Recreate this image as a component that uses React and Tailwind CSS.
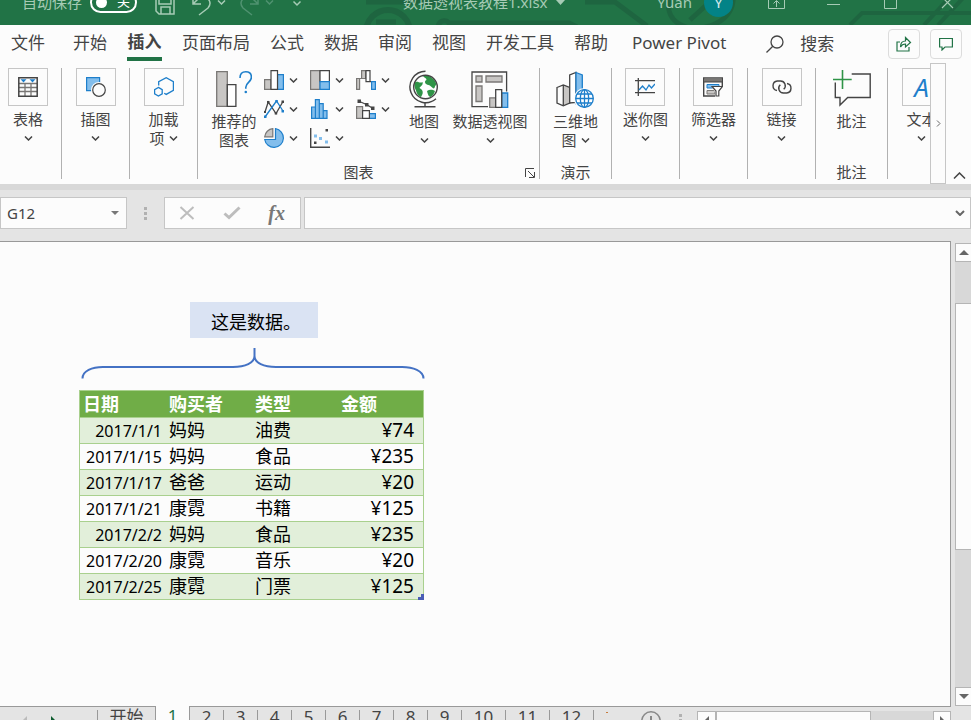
// src/App.jsx

import React, { useState } from "react";

/* ===========================
      DATA
=========================== */
const TABS = [
  "开始",
  "插入",
  "页面布局",
  "公式",
  "数据",
  "审阅",
  "视图",
  "开发工具",
  "帮助",
];

const ROWS = [
  { date: "2017/1/1", buyer: "妈妈", type: "油费", amount: "¥74" },
  { date: "2017/1/15", buyer: "妈妈", type: "食品", amount: "¥235" },
  { date: "2017/1/17", buyer: "爸爸", type: "运动", amount: "¥20" },
  { date: "2017/1/21", buyer: "康霓", type: "书籍", amount: "¥125" },
  { date: "2017/2/2", buyer: "妈妈", type: "食品", amount: "¥235" },
  { date: "2017/2/20", buyer: "康霓", type: "音乐", amount: "¥20" },
  { date: "2017/2/25", buyer: "康霓", type: "门票", amount: "¥125" },
];

const SHEETS = ["2", "3", "4", "5", "6", "7", "8", "9", "10", "11", "12"];

const BLUE = "#1e7fcb";
const LIGHT = "#83beec";
const GRAY = "#c8c6c4";
const MID = "#797775";
const DARK = "#444";

export default function App() {
  const [activeTab, setActiveTab] = useState("插入");

  return (
    <div className="flex h-screen flex-col overflow-hidden bg-[#e4e4e4] font-['Noto_Sans','Noto_Sans_CJK_SC',sans-serif] text-[#444]">
      <TitleBar />
      <TabRow active={activeTab} onChange={setActiveTab} />
      <Ribbon />
      <FormulaBar />
      <div className="flex min-h-0 flex-1">
        <Sheet />
        <VerticalScroll />
      </div>
      <SheetBar />
    </div>
  );
}

/* ===========================
      TITLE BAR
=========================== */
function TitleBar() {
  return (
    <header className="relative flex h-[25px] shrink-0 flex-col justify-end overflow-hidden bg-[#217346] text-[15px] text-[#a6cbb5]">
      <svg
        className="absolute bottom-0 left-[330px] h-[25px] w-[641px]"
        viewBox="0 0 641 25"
        fill="none"
        stroke="#1e6540"
        strokeWidth="5"
      >
        <path d="M36 2h80M46 22h20M120 25a6 6 0 1 1-1-2h120l8 4" />
        <path d="M36 32a22 22 0 1 1 44 0" strokeWidth="6" />
        <path d="M255 2h30l32 24M340 -6c-8 26 14 40 40 32 18-6 26-20 22-34M360 20l22-20" />
        <path d="M520 25l12-12h109M594 25l26-28M608 25l26-28" strokeWidth="4" />
      </svg>
      <div className="relative flex h-[46px] shrink-0 items-center pr-[17px] pl-[22px]">
        <label className="flex items-center gap-2">
          <span>自动保存</span>
          <span className="relative flex h-[21px] w-[47px] items-center justify-end rounded-full border-2 border-white pr-[5px] text-[13px] text-white">
            <input type="checkbox" className="absolute inset-0 appearance-none" />
            <span className="absolute left-1 h-[11px] w-[11px] rounded-full bg-white" />
            关
          </span>
        </label>
        <div className="ml-[18px] flex items-center">
          <button aria-label="保存">
            <svg className="h-[26px] w-5" viewBox="0 0 20 26" fill="none" stroke="#a6cbb5" strokeWidth="1.5">
              <path d="M1 6h18v19H4l-3-3zM4 6v9h12V6M6 25v-7h9v7" />
            </svg>
          </button>
          <button aria-label="撤消" className="ml-4">
            <svg className="h-[28px] w-5" viewBox="0 0 20 28" fill="none" stroke="#a6cbb5" strokeWidth="1.5">
              <path d="M2 8v8h8M2 16l6-6c8-4 14 4 9 10l-9 7" />
            </svg>
          </button>
          <Chevron className="ml-[6px] text-[#a6cbb5]" />
          <button aria-label="恢复" className="ml-[14px]">
            <svg className="h-[28px] w-5" viewBox="0 0 20 28" fill="none" stroke="#4f9270" strokeWidth="1.5">
              <path d="M18 8v8h-8M18 16l-6-6C4 6-2 14 3 20l9 7" />
            </svg>
          </button>
          <Chevron className="ml-[5px] text-[#4f9270]" />
          <button aria-label="自定义快速访问工具栏" className="ml-[18px]">
            <svg className="h-[10px] w-[10px]" viewBox="0 0 10 10" fill="none" stroke="#a6cbb5" strokeWidth="1.5">
              <path d="M1 1h8M1.500 4.500L5 8l3.500-3.500" />
            </svg>
          </button>
        </div>
        <div className="ml-[101px] flex items-center gap-2">
          <span>数据透视表教程1.xlsx</span>
          <svg className="h-[5px] w-[9px]" viewBox="0 0 9 5" fill="#a6cbb5">
            <path d="M0 0h9L4.500 5z" />
          </svg>
        </div>
        <div className="ml-auto flex items-center">
          <span>Yuan</span>
          <span className="ml-3 flex h-[29px] w-[29px] items-center justify-center rounded-full bg-[#038387] text-[#d5eaec]">
            Y
          </span>
          <button aria-label="功能区显示选项" className="ml-[35px]">
            <svg className="h-[14px] w-[17px]" viewBox="0 0 17 14" fill="none" stroke="#a6cbb5">
              <path d="M.5.500h16v13H.500zM.5 3.500h16M8.500 12V6M5.500 8.500l3-3 3 3" />
            </svg>
          </button>
          <button aria-label="最小化" className="ml-[42px]">
            <svg className="h-[13px] w-[13px]" viewBox="0 0 13 13" stroke="#a6cbb5">
              <path d="M0 8.500h13" />
            </svg>
          </button>
          <button aria-label="最大化" className="ml-11">
            <svg className="h-[13px] w-[13px]" viewBox="0 0 13 13" fill="none" stroke="#a6cbb5">
              <path d="M.5.500h12v12H.500z" />
            </svg>
          </button>
          <button aria-label="关闭" className="ml-11">
            <svg className="h-[13px] w-[13px]" viewBox="0 0 13 13" stroke="#a6cbb5" strokeWidth="1.200">
              <path d="M1 1l11 11M12 1L1 12" />
            </svg>
          </button>
        </div>
      </div>
    </header>
  );
}

/* ===========================
      TAB ROW
=========================== */
function TabRow({ active, onChange }) {
  return (
    <div className="flex h-[37px] shrink-0 items-center bg-[#fcfcfc] pr-[9px] pl-[11px] text-[17px] leading-5 whitespace-nowrap">
      <button className="h-full shrink-0 border-b-4 border-transparent pt-[2px]">文件</button>
      <nav className="ml-7 flex h-full shrink-0 gap-5">
        {TABS.map((tab) => (
          <button
            key={tab}
            onClick={() => onChange(tab)}
            className={
              tab === active
                ? "h-[36px] w-[35px] border-b-4 border-[#217346] pt-px font-bold"
                : "h-full border-b-4 border-transparent pt-[2px]"
            }
          >
            {tab}
          </button>
        ))}
        <button className="ml-1 h-full border-b-4 border-transparent pt-[2px]">Power Pivot</button>
      </nav>
      <button className="ml-10 flex shrink-0 items-center gap-4">
        <svg className="h-[18px] w-[18px]" viewBox="0 0 18 18" fill="none" stroke={DARK} strokeWidth="1.300">
          <circle cx="11" cy="7" r="6" />
          <path d="M6.800 11.200L.5 17.500" />
        </svg>
        搜索
      </button>
      <div className="ml-auto flex gap-[10px]">
        <button
          aria-label="共享"
          className="flex h-[30px] w-8 items-center justify-center rounded-sm border border-[#dcdcdc]"
        >
          <svg className="h-4 w-4" viewBox="0 0 16 16" fill="none" stroke="#217346" strokeWidth="1.200">
            <path d="M4 6H1v9h12v-4M4.500 11c0-4 2-6 5-6V1.500l5 5-5 4.500V8C7 8 5.500 9 4.500 11z" />
          </svg>
        </button>
        <button
          aria-label="批注"
          className="flex h-[30px] w-8 items-center justify-center rounded-sm border border-[#dcdcdc]"
        >
          <svg className="h-[14px] w-[14px]" viewBox="0 0 14 14" fill="none" stroke="#217346" strokeWidth="1.200">
            <path d="M.6 1.500h12.800v8.500H6l-3 3v-3H.600z" />
          </svg>
        </button>
      </div>
    </div>
  );
}

/* ===========================
      RIBBON
=========================== */
function Ribbon() {
  return (
    <div className="flex h-[128px] shrink-0 border-b-6 border-[#d8d8d8] bg-[#fcfcfc]">
      <div className="flex min-w-0 flex-1 overflow-hidden pt-[6px] text-[15px] leading-[19px] whitespace-nowrap">
        <Group className="w-[62px] pr-[5px]">
          <BoxButton label="表格" icon={<TableIcon />} />
        </Group>
        <Group className="w-[68px]">
          <BoxButton label="插图" icon={<ShapesIcon />} />
        </Group>
        <Group className="w-[68px]">
          <BoxButton label="加载" tail="项" icon={<AddinIcon />} />
        </Group>

        <Group className="w-[342px]" name="图表" launcher>
          <div className="flex w-full pl-[11px]">
            <BigButton className="w-[50px]" label="推荐的" tail="图表" plain icon={<RecommendIcon />} />
            <div className="mt-[2px] ml-[5px] grid grid-cols-3 gap-x-3 gap-y-[9px] self-start">
              <SmallButton label="柱形图" icon={<ColumnIcon />} />
              <SmallButton label="层次结构图" icon={<TreemapIcon />} />
              <SmallButton label="瀑布图" icon={<WaterfallIcon />} />
              <SmallButton label="折线图" icon={<LineIcon />} />
              <SmallButton label="统计图" icon={<HistogramIcon />} />
              <SmallButton label="组合图" icon={<ComboIcon />} />
              <SmallButton label="饼图" icon={<PieIcon />} />
              <SmallButton label="散点图" icon={<ScatterIcon />} />
            </div>
            <BigButton className="ml-[18px] w-8" label="地图" icon={<GlobeIcon />} />
            <BigButton className="ml-3 w-[76px]" label="数据透视图" icon={<PivotIcon />} />
          </div>
        </Group>

        <Group className="w-[72px]" name="演示">
          <BigButton label="三维地" tail="图" icon={<Map3DIcon />} />
        </Group>
        <Group className="w-[68px]">
          <BoxButton label="迷你图" icon={<SparklineIcon />} />
        </Group>
        <Group className="w-[68px]">
          <BoxButton label="筛选器" icon={<SlicerIcon />} />
        </Group>
        <Group className="w-[68px]">
          <BoxButton label="链接" icon={<LinkIcon />} />
        </Group>
        <Group className="w-[72px]" name="批注">
          <BigButton label="批注" plain icon={<CommentIcon />} />
        </Group>
        <Group className="w-[68px]">
          <BoxButton
            label="文本"
            icon={<span className="text-[26px] text-[#1e7fcb] italic">A</span>}
          />
        </Group>
      </div>
      <button
        aria-label="向右滚动"
        className="mt-px flex w-4 shrink-0 items-center justify-center border border-[#c6c6c6]"
      >
        <svg className="h-[7px] w-[5px]" viewBox="0 0 5 7" fill="none" stroke="#666">
          <path d="M1 .5l3 3-3 3" />
        </svg>
      </button>
      <button aria-label="折叠功能区" className="flex w-[25px] shrink-0 items-end justify-end pr-[5px] pb-[5px]">
        <svg className="h-[7px] w-[13px]" viewBox="0 0 13 7" fill="none" stroke={DARK} strokeWidth="1.500">
          <path d="M1 6.500l5.500-5.500L12 6.500" />
        </svg>
      </button>
    </div>
  );
}

function Group({ className, name, launcher, children }) {
  return (
    <section
      className={`flex h-[111px] shrink-0 flex-col items-center border-r border-[#b1b1b1] ${className}`}
    >
      {children}
      {name && (
        <div className="mt-auto flex w-full items-center leading-[13px]">
          <span className="flex-1 text-center">{name}</span>
          {launcher && (
            <button aria-label="查看所有图表" className="mr-1 flex w-4 justify-end">
              <svg className="h-[10px] w-[10px]" viewBox="0 0 10 10" fill="none" stroke={DARK}>
                <path d="M.5 9V.500H9M3 3l6 6M9.500 4v5.500H4" />
              </svg>
            </button>
          )}
        </div>
      )}
    </section>
  );
}

function Chevron({ className = "" }) {
  return (
    <svg
      className={`h-[5px] w-[9px] shrink-0 ${className}`}
      viewBox="0 0 9 5"
      fill="none"
      stroke="currentColor"
      strokeWidth="1.500"
    >
      <path d="M1 .5l3.500 3.500L8 .5" />
    </svg>
  );
}

function ButtonText({ label, tail, plain }) {
  return (
    <>
      <span className="mt-1">{label}</span>
      <span className="flex h-[19px] items-center gap-1">
        {tail}
        {!plain && <Chevron />}
      </span>
    </>
  );
}

function BoxButton({ label, tail, icon }) {
  return (
    <button className="flex flex-col items-center">
      <span className="flex h-[38px] w-10 items-center justify-center border border-[#c6c6c6]">
        {icon}
      </span>
      <ButtonText label={label} tail={tail} />
    </button>
  );
}

function BigButton({ className = "", label, tail, plain, icon }) {
  return (
    <button className={`flex flex-col items-center pt-[2px] ${className}`}>
      <span className="flex h-[38px] items-center">{icon}</span>
      <ButtonText label={label} tail={tail} plain={plain} />
    </button>
  );
}

function SmallButton({ label, icon }) {
  return (
    <button aria-label={label} className="flex h-5 items-center gap-[5px]">
      {icon}
      <Chevron />
    </button>
  );
}

/* ===========================
      RIBBON ICONS
=========================== */
function Icon20({ children }) {
  return (
    <svg className="h-5 w-5 shrink-0" viewBox="0 0 20 20" fill="none">
      {children}
    </svg>
  );
}

function TableIcon() {
  return (
    <Icon20>
      <path d="M1 6.500h18M1 10.500h18M1 14.500h18M7 6.500V19M13 6.500V19" stroke={MID} strokeWidth="1.300" />
      <path d="M.8.800h18.400v18.400H.800z" stroke={DARK} strokeWidth="1.500" />
      <path d="M2.500 2.200h6L5.500 5.500zM11.500 2.200h6L14.500 5.500z" fill={BLUE} />
    </Icon20>
  );
}

function ShapesIcon() {
  return (
    <Icon20>
      <path d="M.6.600h13v13h-13z" fill={LIGHT} stroke={BLUE} strokeWidth="1.200" />
      <circle cx="13" cy="13" r="8" fill="#fcfcfc" />
      <circle cx="13" cy="13" r="6.300" fill="#fcfcfc" stroke={DARK} strokeWidth="1.200" />
    </Icon20>
  );
}

function AddinIcon() {
  return (
    <Icon20>
      <g stroke={BLUE} strokeWidth="1.300">
        <path d="M4.700 8.600V4.600L12.200.700l7.200 3.900v8.800l-7.200 4-2-1.100" />
        <path d="M4.400 10.400l3.800 2.200v4.300l-3.800 2.200-3.800-2.200v-4.300z" />
      </g>
    </Icon20>
  );
}

function RecommendIcon() {
  return (
    <svg className="h-9 w-9" viewBox="0 0 36 36" fill="none" strokeWidth="1.300">
      <path d="M.7.700h10.600v34.600H.700z" fill={GRAY} stroke={MID} />
      <path d="M11.300 13.700h8.600v21.600h-8.600z" fill="#fff" stroke={DARK} />
      <path d="M24 7c0-4 2.500-6.200 5.800-6.200 3.400 0 5.600 2.200 5.600 5.400 0 5-5.600 5.200-5.600 10v1.500" stroke={BLUE} strokeWidth="1.600" />
      <circle cx="29.800" cy="21" r="1.300" fill={BLUE} />
    </svg>
  );
}

function ColumnIcon() {
  return (
    <Icon20>
      <path d="M.6 9.600h6.400v9.800H.600z" fill={GRAY} stroke={MID} strokeWidth="1.200" />
      <path d="M13.500 4.600h5.900v14.800h-5.900z" fill={LIGHT} stroke={BLUE} strokeWidth="1.200" />
      <path d="M7 .6h6.500v18.800H7z" fill="#fff" stroke={DARK} strokeWidth="1.200" />
    </Icon20>
  );
}

function TreemapIcon() {
  return (
    <Icon20>
      <path d="M.6.600h9.400v18.800H.600z" fill={GRAY} stroke={MID} strokeWidth="1.200" />
      <path d="M10 .6h9.400v11H10z" fill="#fff" stroke={DARK} strokeWidth="1.200" />
      <path d="M10 11.600h9.400v7.800H10z" fill={LIGHT} stroke={BLUE} strokeWidth="1.200" />
    </Icon20>
  );
}

function WaterfallIcon() {
  return (
    <Icon20>
      <path d="M.6 8.500h3v10.900h-3zM5.600.600h4v7.900h-4zM3.600 8.500h2" fill={GRAY} stroke={MID} strokeWidth="1.200" />
      <path d="M10 .6h4v11h-4zM14 11.600h2" fill="#fff" stroke={DARK} strokeWidth="1.200" />
      <path d="M15.600 11.600h3.800v7.800h-3.800z" fill={LIGHT} stroke={BLUE} strokeWidth="1.200" />
    </Icon20>
  );
}

function LineIcon() {
  return (
    <Icon20>
      <path d="M1 13l3.200-10L12 14.500l7-12" stroke={DARK} strokeWidth="1.300" />
      <path d="M1 18L12.500 2 19 12" stroke={BLUE} strokeWidth="1.300" />
      <path d="M3 2h2.500v2.500H3zM0 12h2v2H0zM10.700 13h2.500v2.500h-2.500zM17.500 1.500H20V4h-2.500z" fill={DARK} />
      <path d="M0 16.500h2.500V19H0zM11.300 1h2.500v2.500h-2.500zM17.500 11H20v2.500h-2.500z" fill={BLUE} />
    </Icon20>
  );
}

function HistogramIcon() {
  return (
    <Icon20>
      <path
        d="M1.600 8h3.800v11.400H1.600zM5.400.600h3.900v18.800H5.400zM9.300 4.600h3.900v14.800H9.300zM13.200 11.600H17v7.800h-3.800z"
        fill={LIGHT}
        stroke={BLUE}
        strokeWidth="1.200"
      />
    </Icon20>
  );
}

function ComboIcon() {
  return (
    <Icon20>
      <path d="M.6 7.600h6v11.800h-6z" fill={GRAY} stroke={MID} strokeWidth="1.200" />
      <path d="M13.400 14.600h6v4.800h-6z" fill={LIGHT} stroke={BLUE} strokeWidth="1.200" />
      <path d="M6.600 11.600h6.800v7.800H6.600z" fill="#fff" stroke={DARK} strokeWidth="1.200" />
      <path d="M3.500 2.500l7 3 6.500 4" stroke={DARK} strokeWidth="1.300" />
      <path d="M1.500.500H5V4H1.500zM9 4h3.500v3.500H9zM15 7.500h3.500V11H15z" fill={DARK} />
    </Icon20>
  );
}

function PieIcon() {
  return (
    <Icon20>
      <path d="M11.500.700a9.400 9.400 0 1 1-10.800 10.800h10.800z" fill={LIGHT} stroke={BLUE} strokeWidth="1.200" />
      <path d="M8.800.700v8.100H.700A9 9 0 0 1 8.800.700z" fill={GRAY} stroke={MID} strokeWidth="1.200" />
    </Icon20>
  );
}

function ScatterIcon() {
  return (
    <Icon20>
      <path d="M.7 0v19.300H20" stroke={DARK} strokeWidth="1.400" />
      <path d="M15.500 1H18v2.500h-2.500zM4 13.500h2.500V16H4z" fill={DARK} />
      <path d="M4 6.500h3v3H4zM9 9h3v3H9zM15 12.500h3v3h-3z" fill={LIGHT} />
    </Icon20>
  );
}

function GlobeIcon() {
  return (
    <svg className="h-[38px] w-[30px]" viewBox="0 0 30 38" fill="none">
      <circle cx="16.500" cy="17" r="11.800" fill="#fff" />
      <path
        d="M5.500 13c3-3 5 1 8-1 1 3-2 4-3 6 2 1 4 3 3 6-1 2-1 3-2 3-3-2-4-4-4.500-6.500-1-2-2-4-1.500-7.500zM14 6c3-1 7-.5 9 2 3 2 4 4 4.500 7-2 0-1 3-3 3.500-2-1-3-3-5-3.500-3 0-5-4-2-5 0-2-2-2-3.500-4zM18 21c3-2 6-1 8 0-1 3-2 4-4.500 6-2 0-3-4-3.500-6z"
        fill="#2f9447"
      />
      <circle cx="16.500" cy="17" r="11.800" stroke={DARK} strokeWidth="1.400" />
      <path d="M16.500 1.300A15.700 15.700 0 1 0 27 28.800" stroke={DARK} strokeWidth="1.400" />
      <path d="M16 32.700v4M5.500 36.700h21" stroke={DARK} strokeWidth="1.400" />
    </svg>
  );
}

function PivotIcon() {
  return (
    <svg className="h-[38px] w-[38px]" viewBox="0 0 38 38" fill="none" strokeWidth="1.300">
      <path d="M1 2h34.600v34.600H1z" stroke={DARK} />
      <path d="M5 6h6v6H5zM15 6h16v6H15zM5 16h6v15.500H5z" fill={GRAY} stroke={MID} />
      <path d="M17 26h6v-8h9v3.500h6V38H17z" fill="#fcfcfc" />
      <path d="M18.700 27.800h6v9.500h-6z" fill={GRAY} stroke={MID} />
      <path d="M30.700 23h6v14.300h-6z" fill={LIGHT} stroke={BLUE} />
      <path d="M24.700 19.700h6v17.600h-6z" fill="#fff" stroke={DARK} />
    </svg>
  );
}

function Map3DIcon() {
  return (
    <svg className="h-[38px] w-[38px]" viewBox="0 0 38 38" fill="none" strokeWidth="1.300">
      <path d="M7.300 15l6.400 2.500V33l-6.400 2.800z" fill={GRAY} />
      <path d="M1 17.500L7.300 15l6.400 2.500V33l-6.400 2.800L1 33zM7.300 15v20" stroke={DARK} />
      <path d="M13.700 33V5L20 2.500v30z" fill="#fff" stroke={DARK} />
      <path d="M20 2.500L26.300 5v26.500L20 33.500z" fill={LIGHT} stroke={BLUE} />
      <circle cx="28.500" cy="28.500" r="10.500" fill="#fcfcfc" />
      <g stroke={BLUE}>
        <circle cx="28.500" cy="28.500" r="8.800" fill="#fff" />
        <ellipse cx="28.500" cy="28.500" rx="4.200" ry="8.800" />
        <path d="M28.500 19.500v18M19.700 28.500h17.600M21 24h15M21 33h15" />
      </g>
    </svg>
  );
}

function SparklineIcon() {
  return (
    <Icon20>
      <path d="M0 3.700h20M0 15.700h20M3.300 1v18" stroke={DARK} strokeWidth="1.300" />
      <path d="M4 13l3.500-4 3.500 4 3-5 2.500 3L20 7" stroke={BLUE} strokeWidth="1.300" />
    </Icon20>
  );
}

function SlicerIcon() {
  return (
    <Icon20>
      <path d="M.7 1h18.600v18H.700z" stroke={DARK} strokeWidth="1.400" />
      <path d="M1 1.500h18v3.500H1z" fill={MID} />
      <path d="M.7 5h18.600" stroke={DARK} />
      <path d="M4 7.500h12v3.500H4z" fill={LIGHT} stroke={BLUE} />
      <path d="M4 13.500h8v3.500H4z" fill={GRAY} stroke={MID} />
      <path d="M8 9h13v11h-9v-5z" fill="#fcfcfc" />
      <path d="M9 9.500h10.500l-3.700 4.500v5h-2.800v-5z" fill="#fff" stroke={DARK} strokeWidth="1.200" />
    </Icon20>
  );
}

function LinkIcon() {
  return (
    <Icon20>
      <g stroke={DARK} strokeWidth="1.400">
        <path d="M5 13.500A4.800 4.800 0 0 1 5.300 4h3.200a4.700 4.700 0 0 1 3.200 8.200" />
        <path d="M15 6.500a4.800 4.800 0 0 1-.3 9.500h-3.200a4.700 4.700 0 0 1-3.200-8.200" />
      </g>
    </Icon20>
  );
}

function CommentIcon() {
  return (
    <svg className="h-[38px] w-[38px]" viewBox="0 0 38 38" fill="none" strokeWidth="1.400">
      <path d="M18.700 4h18.500v23.500H14.700L7 35v-7.500H2.300V12.500" stroke={DARK} />
      <path d="M0 9.500h18.700M9.500 0v19" stroke="#2f9447" strokeWidth="1.600" />
    </svg>
  );
}

/* ===========================
      FORMULA BAR
=========================== */
function FormulaBar() {
  return (
    <div className="flex h-[51px] shrink-0 items-start pt-[7px]">
      <div className="flex h-8 w-[127px] shrink-0 items-center border border-[#c6c6c6] bg-[#fcfcfc] pr-[7px] pl-[6px]">
        <input
          aria-label="名称框"
          defaultValue="G12"
          className="min-w-0 flex-1 bg-transparent text-[15px] leading-5 outline-none"
        />
        <svg className="h-1 w-2" viewBox="0 0 8 4" fill="#777">
          <path d="M0 0h8L4 4z" />
        </svg>
      </div>
      <div className="ml-4 flex h-8 w-[5px] shrink-0 flex-col items-center justify-center gap-[2px]">
        <span className="h-[3px] w-[3px] bg-[#b1b1b1]" />
        <span className="h-[3px] w-[3px] bg-[#b1b1b1]" />
        <span className="h-[3px] w-[3px] bg-[#b1b1b1]" />
      </div>
      <div className="ml-4 flex h-8 w-[137px] shrink-0 items-center justify-between border border-[#c6c6c6] bg-[#fcfcfc] pr-[15px] pl-[14px]">
        <button aria-label="取消">
          <svg className="h-[14px] w-4" viewBox="0 0 16 14" fill="none" stroke="#bdbdbd" strokeWidth="2">
            <path d="M1.500 1l13 12M14.500 1l-13 12" />
          </svg>
        </button>
        <button aria-label="输入">
          <svg className="h-[14px] w-[18px]" viewBox="0 0 18 14" fill="none" stroke="#bdbdbd" strokeWidth="3">
            <path d="M1.500 7.500l4.500 4L16.500 1.500" />
          </svg>
        </button>
        <button
          aria-label="插入函数"
          className="font-['Liberation_Serif',serif] text-[20px] leading-5 font-bold text-[#777] italic"
        >
          fx
        </button>
      </div>
      <div className="ml-[3px] flex h-8 min-w-0 flex-1 items-center border border-[#c6c6c6] bg-[#fcfcfc] pr-[5px]">
        <input aria-label="编辑栏" className="min-w-0 flex-1 bg-transparent px-2 text-[15px] outline-none" />
        <svg className="h-[6px] w-[10px] shrink-0" viewBox="0 0 10 6" fill="none" stroke="#666" strokeWidth="2">
          <path d="M1 1l4 4 4-4" />
        </svg>
      </div>
    </div>
  );
}

/* ===========================
      WORKSHEET
=========================== */
function Sheet() {
  return (
    <main className="min-w-0 flex-1 overflow-hidden border-t border-r border-[#999] bg-[#fcfcfc] pt-[60px] pl-[79px] text-black">
      <p className="ml-[111px] flex h-9 w-32 items-center bg-[#dae3f3] pt-[3px] pl-[21px] text-[18px] leading-6">
        这是数据。
      </p>
      <svg
        className="mt-[10px] ml-[2px] h-[31px] w-[344px]"
        viewBox="0 0 344 31"
        fill="none"
        stroke="#4472c4"
        strokeWidth="2"
      >
        <path d="M1.500 30.500C1.500 23 11 19 22 19H152c12 0 21.500-4 21.500-11V0v8c0 7 9.500 11 21.500 11H321c11 0 21.500 4 21.500 11.500" />
      </svg>

      <div className="relative mt-[11px] w-[345px]">
        <table className="w-full table-fixed border-separate border-spacing-0 border-t border-l border-[#a9d08e] text-[18px] leading-[25px]">
          <thead>
            <tr className="h-[27px] bg-[#70ad47] text-left text-white">
              <th className="border-b border-[#a9d08e] p-0 pl-[3px]">日期</th>
              <th className="border-b border-[#a9d08e] p-0 pl-[3px]">购买者</th>
              <th className="border-b border-[#a9d08e] p-0 pl-[3px]">类型</th>
              <th className="border-r border-b border-[#a9d08e] p-0 pl-[3px]">金额</th>
            </tr>
          </thead>
          <tbody>
            {ROWS.map((row) => (
              <tr key={row.date} className="h-[26px] odd:bg-[#e2efda]">
                <td className="border-b border-[#a9d08e] p-0 pt-[2px] pr-1 text-right text-[16px] leading-[23px]">
                  {row.date}
                </td>
                <td className="border-b border-[#a9d08e] p-0 pl-[3px]">{row.buyer}</td>
                <td className="border-b border-[#a9d08e] p-0 pl-[3px]">{row.type}</td>
                <td className="border-r border-b border-[#a9d08e] p-0 pr-[9px] text-right text-[19px]">
                  {row.amount}
                </td>
              </tr>
            ))}
          </tbody>
        </table>
        <svg className="absolute right-0 bottom-0 h-[6px] w-[6px]" viewBox="0 0 6 6" fill="#4a5db5">
          <path d="M3 0h3v6H0V3h3z" />
        </svg>
      </div>
    </main>
  );
}

function VerticalScroll() {
  return (
    <div className="flex w-5 shrink-0 flex-col pt-[2px] pl-1">
      <button
        aria-label="向上滚动"
        className="flex h-[19px] shrink-0 items-center justify-center border border-r-0 border-[#b5b5b5] bg-[#fcfcfc]"
      >
        <svg className="h-[5px] w-[10px]" viewBox="0 0 10 5" fill="#666">
          <path d="M0 5h10L5 0z" />
        </svg>
      </button>
      <div className="flex-1 bg-[#d8d8d8] pt-[41px]">
        <div className="h-[247px] border border-r-0 border-[#b5b5b5] bg-[#fcfcfc]" />
      </div>
      <button
        aria-label="向下滚动"
        className="flex h-[19px] shrink-0 items-center justify-center border border-r-0 border-[#b5b5b5] bg-[#fcfcfc]"
      >
        <svg className="h-[5px] w-[10px]" viewBox="0 0 10 5" fill="#666">
          <path d="M0 0h10L5 5z" />
        </svg>
      </button>
    </div>
  );
}

/* ===========================
      SHEET TABS
=========================== */
function SheetBar() {
  return (
    <footer className="flex h-[14px] shrink-0 overflow-hidden pr-5 text-[17px] leading-[19px]">
      <div className="flex h-7 w-[97px] shrink-0 items-start border-t border-[#999] pt-[9px] pl-[22px]">
        <button aria-label="上一个工作表">
          <svg className="h-[10px] w-[5px]" viewBox="0 0 5 10" fill="#bbb">
            <path d="M5 0v10L0 5z" />
          </svg>
        </button>
        <button aria-label="下一个工作表" className="ml-6">
          <svg className="h-[10px] w-[5px]" viewBox="0 0 5 10" fill="#0e5c2f">
            <path d="M0 0v10l5-5z" />
          </svg>
        </button>
      </div>
      <button className="flex h-7 w-[59px] shrink-0 items-start border-t border-r border-[#999]">
        <span className="mt-[3px] h-6 flex-1 border-l border-[#999] leading-[13px]">开始</span>
      </button>
      <button className="flex h-7 w-[33px] shrink-0 items-start justify-center bg-[#fcfcfc] text-[#217346]">
        1
      </button>
      <div className="flex h-7 min-w-0 flex-1 border-t border-l border-[#999]">
        {SHEETS.map((name) => (
          <button
            key={name}
            className={
              name.length > 1
                ? "mt-[3px] flex h-6 w-11 shrink-0 items-start justify-center border-r border-[#999] leading-[13px]"
                : "mt-[3px] flex h-6 w-[34px] shrink-0 items-start justify-center border-r border-[#999] leading-[13px]"
            }
          >
            {name}
          </button>
        ))}
        <span className="mt-[5px] ml-3 h-px w-[2px] bg-[#c77b3c]" />
        <button aria-label="新工作表" className="mt-1 ml-auto h-5">
          <svg className="h-5 w-5" viewBox="0 0 20 20" fill="none" stroke="#888" strokeWidth="1.500">
            <circle cx="10" cy="10" r="9.200" />
            <path d="M10 5v10M5 10h10" strokeWidth="2" />
          </svg>
        </button>
        <div className="mt-[7px] ml-[18px] flex w-[3px] flex-col gap-[2px]">
          <span className="h-[3px] bg-[#b1b1b1]" />
          <span className="h-[3px] bg-[#b1b1b1]" />
        </div>
        <div className="mt-1 ml-[15px] flex h-[19px] w-[254px] shrink-0 bg-[#d8d8d8]">
          <button
            aria-label="向左滚动"
            className="flex w-[19px] items-center justify-center border border-[#b5b5b5] bg-[#fcfcfc]"
          >
            <svg className="h-[10px] w-[5px]" viewBox="0 0 5 10" fill="#666">
              <path d="M5 0v10L0 5z" />
            </svg>
          </button>
          <div className="w-[155px] border border-[#b5b5b5] bg-[#fcfcfc]" />
          <button
            aria-label="向右滚动工作表"
            className="ml-auto flex w-[18px] items-center justify-center border border-[#b5b5b5] bg-[#fcfcfc]"
          >
            <svg className="h-[10px] w-[5px]" viewBox="0 0 5 10" fill="#666">
              <path d="M0 0v10l5-5z" />
            </svg>
          </button>
        </div>
      </div>
    </footer>
  );
}
